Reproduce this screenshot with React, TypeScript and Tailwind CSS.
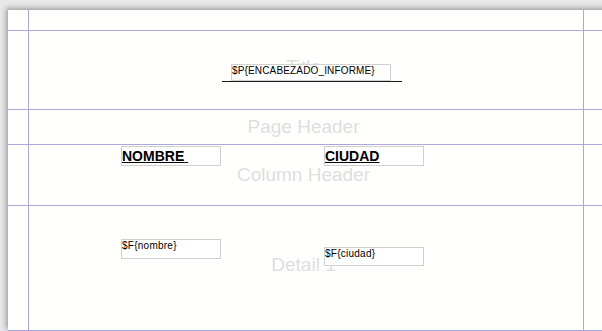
// Report designer canvas: bands separated by guide lines, with fields placed on each band.
import type { ReactNode } from "react";

const LINE = "border-[#a9a9dd]";

interface BandProps {
  height: string;
  label?: string;
  labelPad?: string;
  children?: ReactNode;
}

function Band({ height, label, labelPad = "", children }: BandProps) {
  return (
    <div className={`flex border-b ${LINE} ${height}`}>
      <div className="w-[20px] shrink-0" />
      <div
        className={`relative flex w-[556px] shrink-0 items-center justify-center border-x ${LINE} pr-[5px] ${labelPad}`}
      >
        {label && (
          <span className="select-none text-[19px] leading-[22px] text-[#dedede]">
            {label}
          </span>
        )}
        {children}
      </div>
      <div className="flex-1" />
    </div>
  );
}

export default function App() {
  return (
    <div
      className="h-[331px] w-[602px] overflow-hidden bg-[#e8e8e8] pl-[8px] pt-[10px]"
      style={{ fontFamily: '"Liberation Sans", Arial, sans-serif' }}
    >
      <div className="w-[620px] bg-[#fffffd] shadow-[-2px_-2px_5px_rgba(0,0,0,0.32)]">
        {/* top margin */}
        <Band height="h-[21px]" />

        {/* Title */}
        <Band height="h-[79px]" label="Title" labelPad="pb-[6px]">
          <div className="absolute left-[193px] top-[50px] h-px w-[180px] bg-[#1a1a1a]" />
          <div className="absolute left-[202px] top-[33px] h-[17px] w-[160px] border border-[#d0d0d0] bg-white">
            <span className="block whitespace-pre text-[10px] leading-[12px] tracking-[0.15px] text-black">
              $P{"{"}ENCABEZADO_INFORME{"}"}
            </span>
          </div>
        </Band>

        {/* Page Header */}
        <Band height="h-[35px]" label="Page Header" />

        {/* Column Header */}
        <Band height="h-[61px]" label="Column Header">
          <div className="absolute left-[92px] top-[1px] h-[20px] w-[100px] border border-[#d0d0d0] bg-white">
            <span className="block whitespace-pre pt-[1px] text-[14px] font-bold leading-[16px] text-black underline">
              NOMBRE{" "}
            </span>
          </div>
          <div className="absolute left-[295px] top-[1px] h-[20px] w-[100px] border border-[#d0d0d0] bg-white">
            <span className="block whitespace-pre pt-[1px] text-[14px] font-bold leading-[16px] text-black underline">
              CIUDAD
            </span>
          </div>
        </Band>

        {/* Detail */}
        <Band height="h-[125px]" label="Detail 1" labelPad="pb-[6px]">
          <div className="absolute left-[92px] top-[33px] h-[20px] w-[100px] border border-[#d0d0d0] bg-white">
            <span className="block whitespace-pre text-[10px] leading-[12px] tracking-[0.25px] text-black">
              $F{"{"}nombre{"}"}
            </span>
          </div>
          <div className="absolute left-[295px] top-[41px] h-[19px] w-[100px] border border-[#d0d0d0] bg-white">
            <span className="block whitespace-pre text-[10px] leading-[12px] tracking-[0.25px] text-black">
              $F{"{"}ciudad{"}"}
            </span>
          </div>
        </Band>
      </div>
    </div>
  );
}
